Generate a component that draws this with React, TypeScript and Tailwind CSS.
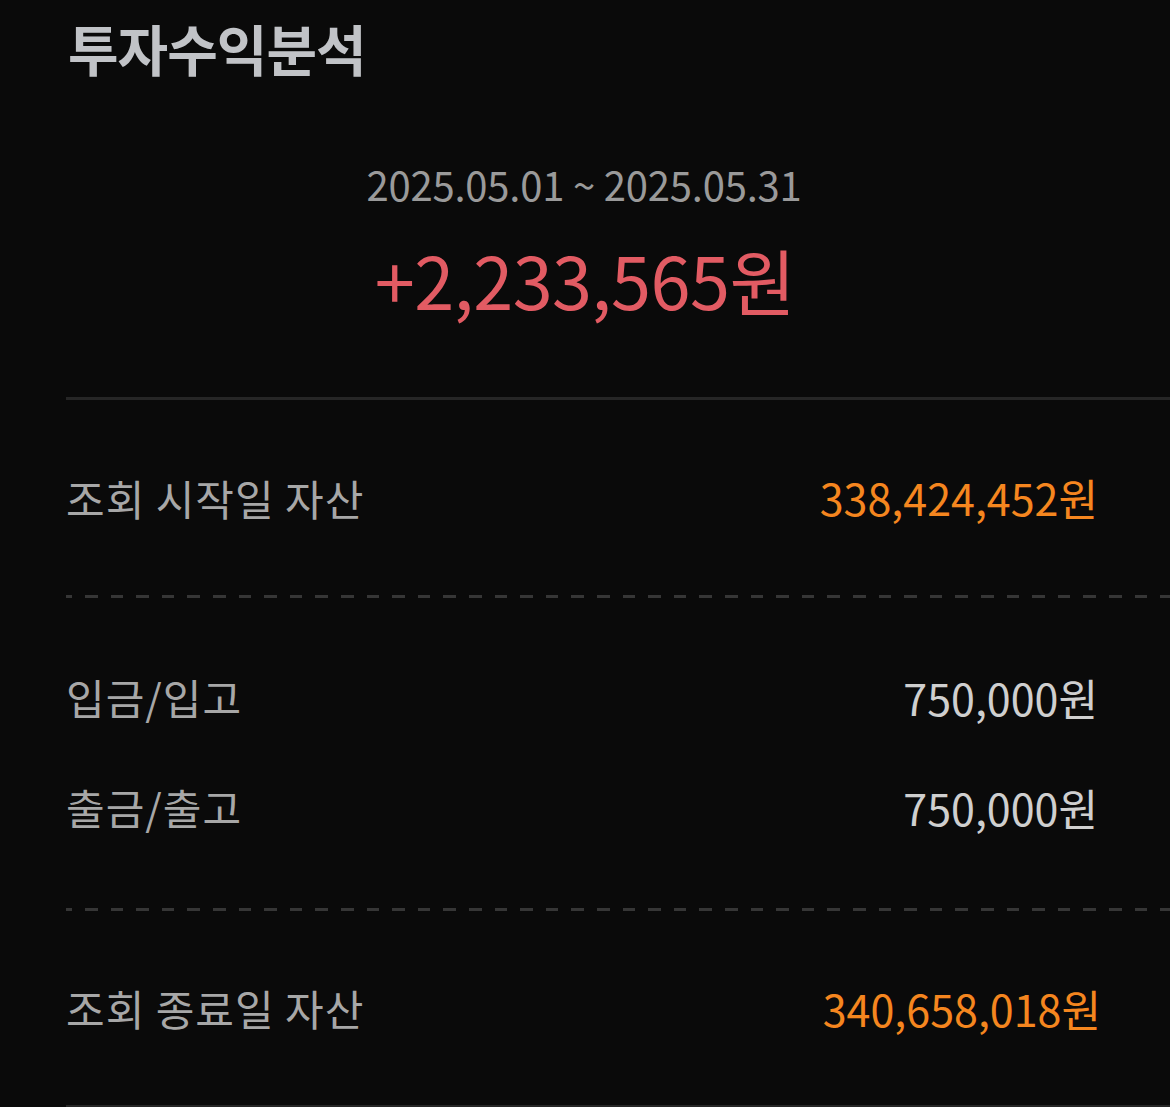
import React from "react";

const rows = [
  { label: "입금/입고", value: "750,000원" },
  { label: "출금/출고", value: "750,000원" },
];

function Dash() {
  return (
    <div className="h-[3px] w-full bg-[repeating-linear-gradient(90deg,#363636_0px_6px,transparent_6px_19px,#363636_19px_25.6px)]" />
  );
}

export default function App() {
  return (
    <div className="min-h-screen bg-[#0a0a0a] pl-[66px] font-['Noto_Sans_CJK_KR','Noto_Sans',sans-serif] overflow-hidden">
      <div className="pr-[72px]">
        <h1 className="h-[94px] flex items-center pl-[2px] text-[55px] font-bold leading-none tracking-[-1px] text-[#c1c3c7]">
          투자수익분석
        </h1>

        <div className="mt-[72px] h-[36px] flex items-center justify-center pl-[4px] text-[40px] leading-none tracking-[-0.2px] text-[#9a9a9a]">
          2025.05.01 ~ 2025.05.31
        </div>

        <div className="mt-[42px] h-[70px] flex items-center justify-center pl-[6px] text-[72px] leading-none tracking-[-0.5px] text-[#e25b63]">
          +2,233,565원
        </div>
      </div>

      <div className="mt-[83px] h-[3px] bg-[#262626]" />

      <div className="pr-[72px] h-[195px] flex items-center justify-between">
        <span className="text-[42px] leading-none tracking-[1px] text-[#a7a7a7]">조회 시작일 자산</span>
        <span className="text-[43px] leading-none text-[#f5861f]">338,424,452원</span>
      </div>

      <Dash />

      <div className="pr-[72px] pt-[79px] pb-[81px] flex flex-col gap-[70px]">
        {rows.map((r) => (
          <div key={r.label} className="h-[40px] flex items-center justify-between">
            <span className="text-[42px] leading-none tracking-[1px] text-[#a7a7a7]">{r.label}</span>
            <span className="text-[43px] leading-none text-[#cfcfcf]">{r.value}</span>
          </div>
        ))}
      </div>

      <Dash />

      <div className="pr-[69px] h-[194px] flex items-center justify-between">
        <span className="text-[42px] leading-none tracking-[1px] text-[#a7a7a7]">조회 종료일 자산</span>
        <span className="text-[43px] leading-none text-[#f5861f]">340,658,018원</span>
      </div>

      <div className="h-[3px] bg-[#262626]" />
    </div>
  );
}
